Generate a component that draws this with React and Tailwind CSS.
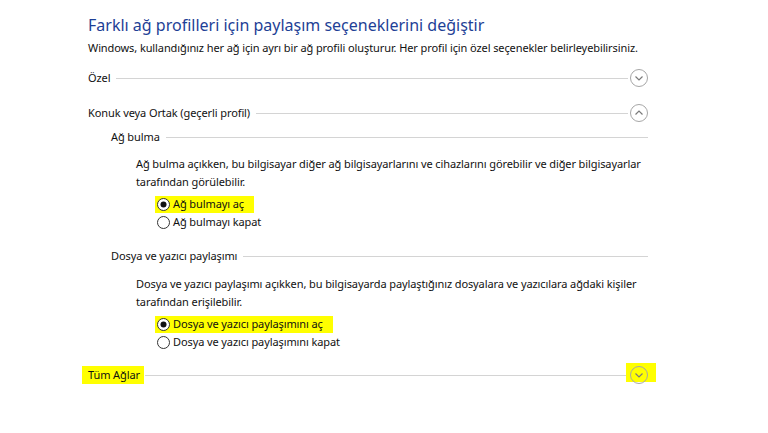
import React from "react";

const font = { fontFamily: '"Segoe UI", "Noto Sans", "DejaVu Sans", sans-serif' };

const body = "text-[11px] leading-[18px] tracking-[-0.1px] text-[#111] whitespace-nowrap";

function CircleChevron({ up = false, highlight = false }) {
  return (
    <div className="relative w-[18px] h-[18px] shrink-0">
      {highlight && (
        <div className="absolute left-[-4px] top-[-3px] w-[30px] h-[19px] bg-[#ffff00]" />
      )}
      <svg className="absolute inset-0" width="18" height="18" viewBox="0 0 18 18">
        <circle cx="9" cy="9" r="8.5" fill="none" stroke="#a6a6a6" strokeWidth="1" />
        {up ? (
          <path d="M5.5 10.5 L9 7 L12.5 10.5" fill="none" stroke="#7a7a7a" strokeWidth="1.2" />
        ) : (
          <path d="M5.5 7.5 L9 11 L12.5 7.5" fill="none" stroke="#7a7a7a" strokeWidth="1.2" />
        )}
      </svg>
    </div>
  );
}

function Radio({ checked }) {
  return (
    <svg width="13" height="13" viewBox="0 0 13 13" className="shrink-0">
      <circle cx="6.5" cy="6.5" r="6" fill="#fff" stroke="#333" strokeWidth="1" />
      {checked && <circle cx="6.5" cy="6.5" r="3" fill="#111" />}
    </svg>
  );
}

function SectionRow({ label, up, highlightLabel, highlightCircle, className = "" }) {
  return (
    <div className={"flex items-center h-[20px] " + className}>
      <span className={body + (highlightLabel ? " bg-[#ffff00] pl-[6px] pr-[4px] ml-[-6px] leading-[17px]" : "")}>
        {label}
      </span>
      <div className={"flex-1 h-px bg-[#d4d4d4] mr-[2px] " + (highlightLabel ? "ml-[1px]" : "ml-[6px]")} />
      <CircleChevron up={up} highlight={highlightCircle} />
    </div>
  );
}

function SubRow({ label, className = "" }) {
  return (
    <div className={"flex items-center h-[18px] ml-[23px] " + className}>
      <span className={body}>{label}</span>
      <div className="flex-1 h-px bg-[#d4d4d4] ml-[6px]" />
    </div>
  );
}

function RadioRow({ checked, label, highlight }) {
  return (
    <div className="flex items-center h-[18px] ml-[69px]">
      <div className={"flex items-center gap-[3px] h-[17px] " + (highlight ? "bg-[#ffff00] pl-[2px] pr-[10px] ml-[-2px]" : "")}>
        <Radio checked={checked} />
        <span className={body}>{label}</span>
      </div>
    </div>
  );
}

export default function App() {
  return (
    <div className="w-[768px] h-[433px] bg-white overflow-hidden" style={font}>
      <div className="flex flex-col pl-[88px] pr-[120px] pt-[14px]">
        <div className="h-[22px] flex items-center text-[16px] text-[#1e3f96] whitespace-nowrap">
          Farklı ağ profilleri için paylaşım seçeneklerini değiştir
        </div>
        <div className={"h-[18px] mt-[3px] flex items-center " + body}>
          Windows, kullandığınız her ağ için ayrı bir ağ profili oluşturur. Her profil için özel seçenekler belirleyebilirsiniz.
        </div>
        <SectionRow label="Özel" className="mt-[11px]" />
        <SectionRow label="Konuk veya Ortak (geçerli profil)" up className="mt-[15px]" />
        <SubRow label="Ağ bulma" className="mt-[5px]" />
        <p className={"ml-[48px] mt-[9px] " + body}>
          Ağ bulma açıkken, bu bilgisayar diğer ağ bilgisayarlarını ve cihazlarını görebilir ve diğer bilgisayarlar
          <br />
          tarafından görülebilir.
        </p>
        <div className="mt-[4px]">
          <RadioRow checked label="Ağ bulmayı aç" highlight />
          <RadioRow label="Ağ bulmayı kapat" />
        </div>
        <SubRow label="Dosya ve yazıcı paylaşımı" className="mt-[16px]" />
        <p className={"ml-[48px] mt-[10px] " + body}>
          Dosya ve yazıcı paylaşımı açıkken, bu bilgisayarda paylaştığınız dosyalara ve yazıcılara ağdaki kişiler
          <br />
          tarafından erişilebilir.
        </p>
        <div className="mt-[4px]">
          <RadioRow checked label="Dosya ve yazıcı paylaşımını aç" highlight />
          <RadioRow label="Dosya ve yazıcı paylaşımını kapat" />
        </div>
        <SectionRow label="Tüm Ağlar" highlightLabel highlightCircle className="mt-[14px]" />
      </div>
    </div>
  );
}
